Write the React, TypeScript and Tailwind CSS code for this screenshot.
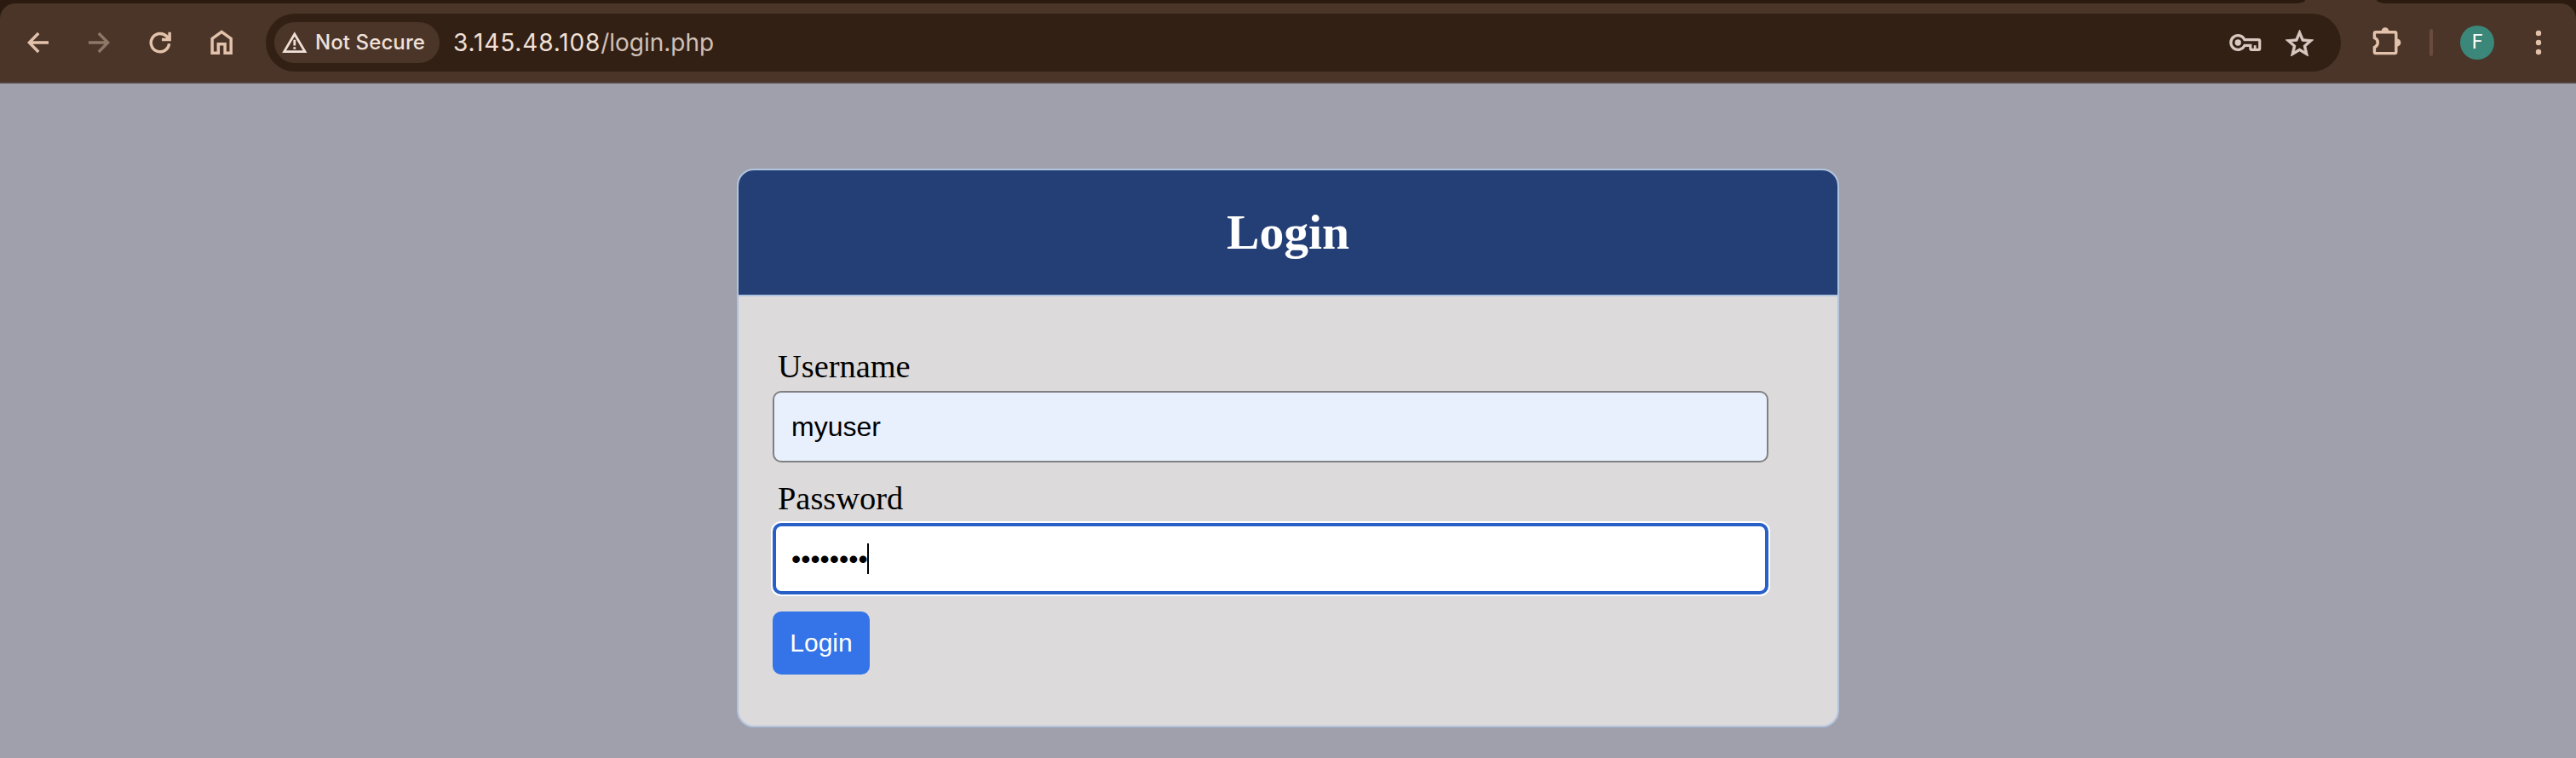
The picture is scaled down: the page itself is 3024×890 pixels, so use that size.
import React from "react";

type IconProps = { className?: string };

const BackIcon = ({ className = "" }: IconProps) => (
  <svg className={className} width="26" height="26" viewBox="0 0 26 26" fill="none" stroke="currentColor" strokeWidth="3.4">
    <path d="M25 13H3M13.2 2 2.4 13l10.8 11" />
  </svg>
);

const ReloadIcon = () => (
  <svg width="26" height="26" viewBox="0 0 26 26" fill="none" stroke="currentColor" strokeWidth="3.5">
    <path d="M23.6 14.3A10.7 10.7 0 1 1 20.8 5.8L23.4 8.6" />
    <path d="M24.1 0.7V9.6H15" />
  </svg>
);

const HomeIcon = () => (
  <svg width="26" height="30" viewBox="0 0 26 30" fill="none" stroke="currentColor" strokeWidth="3.5">
    <path d="M2.1 27.2V10.4L13.15 2.3 24.2 10.4V27.2H17.1V16.7H9.3V27.2Z" />
  </svg>
);

const WarningIcon = () => (
  <svg width="30" height="26" viewBox="0 0 30 26" fill="none" stroke="currentColor" strokeWidth="2.8">
    <path d="M2.6 23.6 14.8 3 27 23.6Z" />
    <path d="M14.8 9.8V16.6M14.8 18.2V20.8" />
  </svg>
);

const KeyIcon = () => (
  <svg width="38" height="22" viewBox="0 0 38 22" fill="none" stroke="currentColor" strokeWidth="3.2">
    <path d="M17.9 7.6H34.3Q35.7 7.6 35.7 9V18Q35.7 19.4 34.3 19.4H26.2Q24.8 19.4 24.8 18V14.4H17.9A8.4 8.4 0 1 1 17.9 7.6Z" />
    <circle cx="10.2" cy="11" r="3.7" fill="currentColor" stroke="none" />
    <path d="M30.2 19V14.2" strokeWidth="2.8" />
  </svg>
);

const StarIcon = () => (
  <svg width="33" height="31" viewBox="2 2 20 19" fill="currentColor" stroke="currentColor" strokeWidth="0.5">
    <path d="M22 9.24l-7.19-.62L12 2 9.19 8.63 2 9.24l5.46 4.73L5.82 21 12 17.27 18.18 21l-1.63-7.03L22 9.24zM12 15.4l-3.76 2.27 1-4.28-3.32-2.88 4.38-.38L12 6.1l1.71 4.04 4.38.38-3.32 2.88 1 4.28L12 15.4z" />
  </svg>
);

const PuzzleIcon = () => (
  <svg width="35" height="36" viewBox="0 0 35 36">
    <path
      d="M3.4 12.4V7.2Q3.4 5.7 4.9 5.7H27.3Q28.8 5.7 28.8 7.2V29.1Q28.8 30.6 27.3 30.6H4.9Q3.4 30.6 3.4 29.1V23.6A6 6 0 0 0 3.4 12.4Z"
      fill="none"
      stroke="currentColor"
      strokeWidth="3.4"
    />
    <path d="M11.6 5A4.4 4.8 0 0 1 20.4 5ZM29.6 13.4A4.8 4.6 0 0 1 29.6 22.6Z" fill="currentColor" />
  </svg>
);

const MenuIcon = () => (
  <svg width="8" height="30" viewBox="0 0 8 30" fill="currentColor">
    <circle cx="4" cy="4" r="3.2" />
    <circle cx="4" cy="15" r="3.2" />
    <circle cx="4" cy="26" r="3.2" />
  </svg>
);

function TabStrip() {
  return (
    <div className="flex h-1 justify-between bg-[#4a3528]">
      <div className="h-1 w-[2706px] rounded-br-[12px_4px] bg-[#2b1a10]" />
      <div className="h-1 w-[234px] rounded-bl-[12px_4px] bg-[#2b1a10]" />
    </div>
  );
}

function Toolbar() {
  return (
    <div className="bg-[#2b1a10]">
      <div className="flex h-[94px] items-center rounded-t-[18px] border-b-2 border-[#51443d] bg-[#4a3528] pr-10 pl-8 text-[#e3c2ab]">
        <BackIcon />
        <BackIcon className="ml-[45px] rotate-180 text-[#8d7767]" />
        <div className="ml-[46px]">
          <ReloadIcon />
        </div>
        <div className="ml-[46px]">
          <HomeIcon />
        </div>
        <div className="ml-[39px] flex h-[68px] w-[2436px] items-center rounded-full bg-[#332014] pr-8 pl-2.5 text-[#f0e0d8]">
          <div className="flex h-12 w-[194px] items-center rounded-full bg-[#4a3528] pl-[9px]">
            <WarningIcon />
            <span className="ml-[9px] font-[Inter,sans-serif] text-[24px] font-medium tracking-[0.1px] whitespace-nowrap">
              Not Secure
            </span>
          </div>
          <span className="ml-4 font-[Inter,sans-serif] text-[28px] whitespace-nowrap">
            <span className="tracking-[0.85px]">3.145.48.108</span>
            <span className="text-[#d0c1b8]">/login.php</span>
          </span>
          <div className="ml-auto flex items-center gap-7 text-[#d8c8c0]">
            <KeyIcon />
            <StarIcon />
          </div>
        </div>
        <div className="ml-[36px]">
          <PuzzleIcon />
        </div>
        <div className="ml-[33px] h-8 w-1 rounded-full bg-[#684c3e]" />
        <div className="ml-8 flex size-10 items-center justify-center rounded-full bg-[#3b877a] font-[Roboto,sans-serif] text-[23px] text-white">
          F
        </div>
        <div className="ml-auto">
          <MenuIcon />
        </div>
      </div>
    </div>
  );
}

function LoginCard() {
  return (
    <div className="mx-auto mt-[100px] h-[656px] w-[1294px] overflow-hidden rounded-[20px] border-2 border-[#b0c4de] bg-[#dcdadb]">
      <h1 className="flex h-[148px] items-center justify-center border-b-2 border-[#b0c4de] bg-[#243f76] font-['Liberation_Serif',serif] text-[57.6px] font-bold text-white">
        Login
      </h1>
      <form className="flex flex-col items-start pt-[59px] pl-10">
        <label className="ml-1.5 h-[52px] font-['Liberation_Serif',serif] text-[38.4px] leading-[46px] text-black">Username</label>
        <div className="flex h-[84px] w-[1169px] items-center rounded-[10px] border-2 border-[#808080] bg-[#e8f0fe] pl-5 font-['Liberation_Sans',sans-serif] text-[32px] text-black">
          myuser
        </div>
        <label className="mt-[19px] ml-1.5 h-[52px] font-['Liberation_Serif',serif] text-[38.4px] leading-[46px] text-black">Password</label>
        <div className="flex h-[84px] w-[1169px] items-center rounded-[10px] border-4 border-[#2860c8] bg-white pl-[18px] font-['Liberation_Sans',sans-serif] text-[32px] text-black ring-2 ring-white">
          ••••••••
          <span className="-ml-px h-9 w-0.5 bg-black" />
        </div>
        <button
          type="button"
          className="mt-5 flex h-[74px] w-[114px] items-center justify-center rounded-[10px] bg-[#3574e8] pb-0.5 font-['Liberation_Sans',sans-serif] text-[30px] text-white"
        >
          Login
        </button>
      </form>
    </div>
  );
}

export default function App() {
  return (
    <div className="flex h-[890px] w-[3024px] flex-col overflow-hidden bg-[#a0a0ac]">
      <TabStrip />
      <Toolbar />
      <LoginCard />
    </div>
  );
}
